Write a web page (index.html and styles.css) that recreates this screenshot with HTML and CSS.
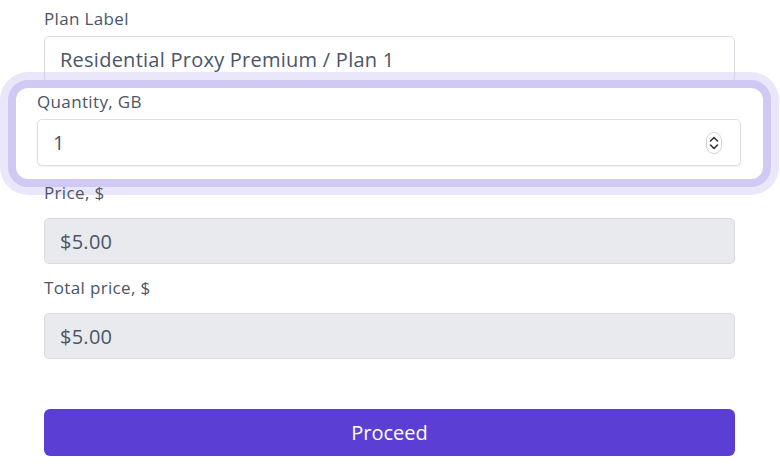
FILE: index.html
```html
<!DOCTYPE html>
<html lang="en">
<head>
    <meta charset="UTF-8">
    <meta name="viewport" content="width=device-width, initial-scale=1.0">
    <title>Plan</title>
    <link rel="stylesheet" href="styles.css">
</head>
<body>
    <div class="form">
        <div class="field field-top">
            <label for="plan">Plan Label</label>
            <input type="text" id="plan" class="input" value="Residential Proxy Premium / Plan 1">
        </div>

        <div class="highlight">
            <div class="field field-top">
                <label for="qty">Quantity, GB</label>
                <div class="spin-wrap">
                    <input type="text" id="qty" class="input" value="1">
                    <svg class="spinner" width="16" height="22" viewBox="0 0 16 22">
                        <rect x="0.5" y="0.5" width="15" height="21" rx="7.5" fill="#fff" stroke="#d4d6db"/>
                        <path d="M4.5 9 L8 5.5 L11.5 9" fill="none" stroke="#2d3340" stroke-width="1.6" stroke-linecap="round" stroke-linejoin="round"/>
                        <path d="M4.5 13 L8 16.5 L11.5 13" fill="none" stroke="#2d3340" stroke-width="1.6" stroke-linecap="round" stroke-linejoin="round"/>
                    </svg>
                </div>
            </div>
        </div>

        <div class="field field-after">
            <label for="price">Price, $</label>
            <input type="text" id="price" class="input input-disabled" value="$5.00" disabled>
        </div>

        <div class="field">
            <label for="total">Total price, $</label>
            <input type="text" id="total" class="input input-disabled" value="$5.00" disabled>
        </div>

        <button class="proceed">Proceed</button>
    </div>
</body>
</html>
```

FILE: styles.css
```css
body {
    font-family: "Open Sans", Arial, sans-serif;
    background-color: #ffffff;
    margin: 0;
    padding: 0;
}
.form {
    padding: 8px 45px 0 44px;
}
.field label {
    display: block;
    font-size: 17px;
    line-height: 22px;
    letter-spacing: 0.35px;
    color: #4b5567;
    margin-bottom: 14px;
}
.field-top label {
    margin-bottom: 6px;
}
.field-after {
    margin-top: -5px;
}
.field + .field {
    margin-top: 13px;
}
.input {
    display: block;
    box-sizing: border-box;
    width: 100%;
    height: 46px;
    padding: 0 15px;
    font-family: "Open Sans", Arial, sans-serif;
    font-size: 20px;
    letter-spacing: 0.25px;
    color: #4b5567;
    background: #ffffff;
    border: 1px solid #dcdee3;
    border-radius: 5px;
    box-shadow: 0 1px 2px rgba(0,0,0,0.06);
    outline: none;
}
.input-disabled {
    background: #e9eaee;
    border-color: #d9dbe0;
    box-shadow: none;
    -webkit-text-fill-color: #4b5567;
    opacity: 1;
}
.highlight {
    margin: -2px -36px 0;
    padding: 3px 22px 13px 21px;
    background: #ffffff;
    border: 8px solid #d0c9f3;
    border-radius: 20px;
    box-shadow: 0 0 0 8px rgba(205, 196, 245, 0.4);
}
.highlight .input {
    height: 47px;
}
.spin-wrap {
    position: relative;
}
.spinner {
    position: absolute;
    right: 19px;
    top: 13px;
}
.proceed {
    display: block;
    width: 100%;
    height: 47px;
    margin-top: 50px;
    background-color: #5b3fd4;
    color: #ffffff;
    border: none;
    border-radius: 6px;
    font-family: "Open Sans", Arial, sans-serif;
    font-size: 20px;
    cursor: pointer;
}
```
